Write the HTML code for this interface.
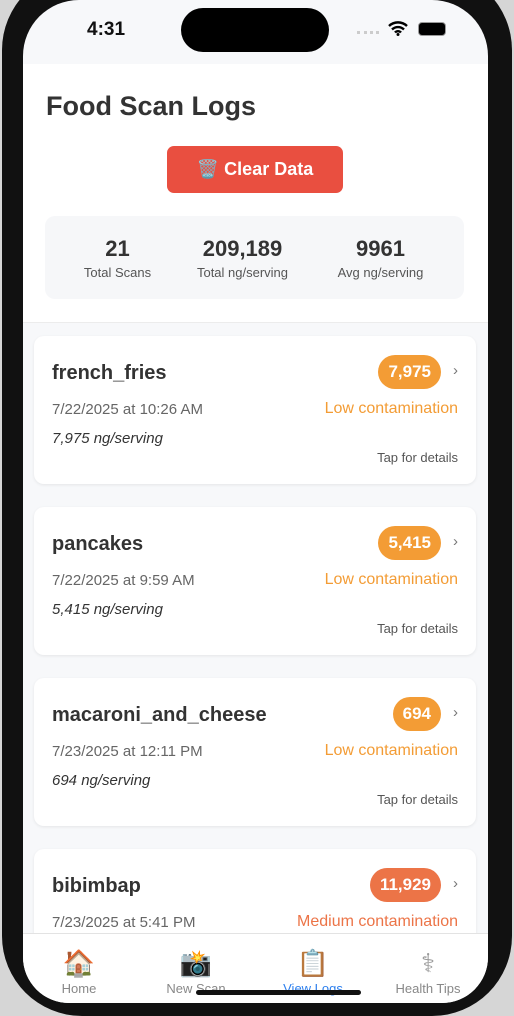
<!DOCTYPE html>
<html><head><style>
*{margin:0;padding:0;box-sizing:border-box}
body{width:514px;height:1016px;background:#d6d6d6;font-family:"Liberation Sans",sans-serif;overflow:hidden;position:relative}
.phone{position:absolute;left:2px;top:-30px;width:510px;height:1046px;background:#111;border-radius:80px}
.screen{position:absolute;left:23px;top:0;width:465px;height:1003px;background:#f7f8fa;border-radius:56px 56px 46px 46px;overflow:hidden}
.status{height:64px;position:relative}
.time{position:absolute;left:64px;top:19px;font-size:19px;font-weight:bold;color:#111}
.island{position:absolute;left:158px;top:8px;width:148px;height:44px;background:#000;border-radius:22px}
.head{position:absolute;top:64px;left:0;width:465px;height:259px;background:#fff;border-bottom:1px solid #ececec}
h1{position:absolute;left:23px;top:27px;font-size:27px;color:#333;font-weight:bold}
.btn{position:absolute;left:144px;top:82px;width:176px;height:47px;background:#e94f40;border-radius:7px;color:#fff;font-weight:bold;font-size:18px;text-align:center;line-height:47px}
.stats{position:absolute;left:22px;top:152px;width:419px;height:83px;background:#f6f7f9;border-radius:10px}
.st{position:absolute;top:20px;text-align:center;color:#333}
.st b{display:block;font-size:22px;margin-bottom:2px}
.st span{font-size:13px;color:#555}
.card{position:absolute;left:11px;width:442px;height:148px;background:#fff;border-radius:10px;box-shadow:0 1px 3px rgba(0,0,0,.08)}
.nm{position:absolute;left:18px;top:26px;font-size:20px;font-weight:bold;color:#333}
.dt{position:absolute;left:18px;top:65px;font-size:15px;color:#666}
.ng{position:absolute;left:18px;top:94px;font-size:15px;font-style:italic;color:#333}
.tap{position:absolute;right:18px;top:114px;font-size:13px;color:#555}
.pill{position:absolute;right:35px;top:19px;height:34px;border-radius:17px;color:#fff;font-weight:bold;font-size:17px;line-height:34px;padding:0 10px}
.chev{position:absolute;right:18px;top:26px;color:#777;font-size:15px}
.lvl{position:absolute;right:18px;top:64px;font-size:16px}
.tab{position:absolute;top:933px;left:0;width:465px;height:70px;background:#fff;border-top:1px solid #e3e3e3}
.ti{position:absolute;top:14px;width:100px;text-align:center;font-size:13px;color:#888}
.ti i{display:block;font-style:normal;font-size:26px;height:33px}
.bar{position:absolute;left:173px;top:56px;width:165px;height:5px;background:#111;border-radius:3px}
</style></head><body>
<div class="phone"></div>
<div class="screen">
<div class="status"><div class="time">4:31</div><div class="island"></div>
<div style="position:absolute;left:334px;top:31px;width:22px;height:3px;border-top:3px dotted #ccc"></div>
<svg style="position:absolute;left:365px;top:21px" width="20" height="15" viewBox="0 0 20 15"><path d="M1 5a13 13 0 0 1 18 0M4 8.5a8.5 8.5 0 0 1 12 0M7 11.5a4 4 0 0 1 6 0" stroke="#000" stroke-width="2.4" fill="none"/><circle cx="10" cy="13.5" r="1.5"/></svg>
<div style="position:absolute;left:395px;top:22px;width:28px;height:14px;background:#000;border-radius:4px;border:1px solid #999"></div></div>
<div class="head"><h1>Food Scan Logs</h1>
<div class="btn">🗑️ Clear Data</div>
<div class="stats">
<div class="st" style="left:35px;width:75px"><b>21</b><span>Total Scans</span></div>
<div class="st" style="left:140px;width:115px"><b>209,189</b><span>Total ng/serving</span></div>
<div class="st" style="left:283px;width:105px"><b>9961</b><span>Avg ng/serving</span></div>
</div></div>

<div class="card" style="top:336px"><div class="nm">french_fries</div><div class="pill" style="background:#f39c35">7,975</div><div class="chev">›</div><div class="dt">7/22/2025 at 10:26 AM</div><div class="lvl" style="color:#f39c35">Low contamination</div><div class="ng">7,975 ng/serving</div><div class="tap">Tap for details</div></div>
<div class="card" style="top:507px"><div class="nm">pancakes</div><div class="pill" style="background:#f39c35">5,415</div><div class="chev">›</div><div class="dt">7/22/2025 at 9:59 AM</div><div class="lvl" style="color:#f39c35">Low contamination</div><div class="ng">5,415 ng/serving</div><div class="tap">Tap for details</div></div>
<div class="card" style="top:678px"><div class="nm">macaroni_and_cheese</div><div class="pill" style="background:#f39c35">694</div><div class="chev">›</div><div class="dt">7/23/2025 at 12:11 PM</div><div class="lvl" style="color:#f39c35">Low contamination</div><div class="ng">694 ng/serving</div><div class="tap">Tap for details</div></div>
<div class="card" style="top:849px"><div class="nm">bibimbap</div><div class="pill" style="background:#ec7447">11,929</div><div class="chev">›</div><div class="dt">7/23/2025 at 5:41 PM</div><div class="lvl" style="color:#ec7447">Medium contamination</div></div>

<div class="tab">
<div class="ti" style="left:6px"><i>🏠</i>Home</div>
<div class="ti" style="left:123px"><i>📸</i>New Scan</div>
<div class="ti" style="left:240px;color:#2f80ed"><i>📋</i>View Logs</div>
<div class="ti" style="left:355px"><i style="color:#999">⚕</i>Health Tips</div>
<div class="bar"></div>
</div>
</div>
</body></html>
